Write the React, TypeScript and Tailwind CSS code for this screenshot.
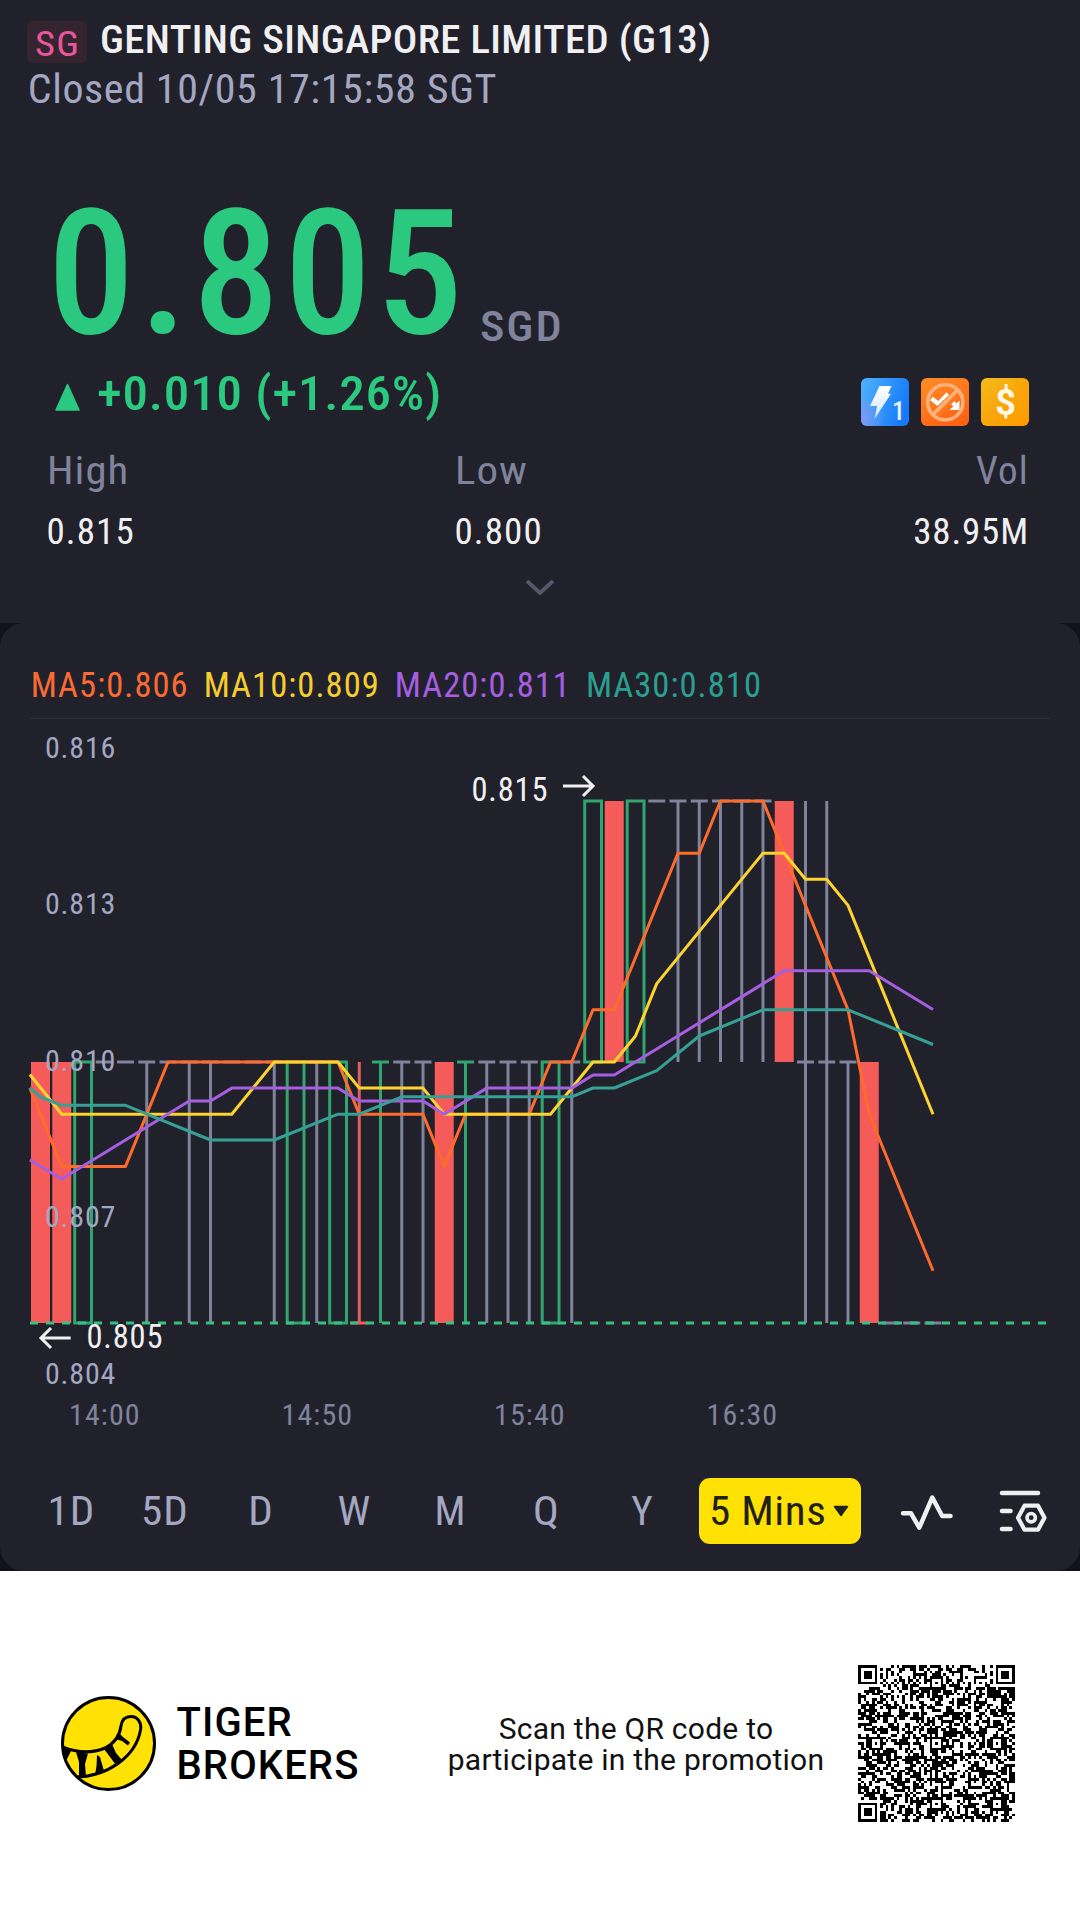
const GREEN = '#2ac97f'
const CANDLE_GREEN = '#30a56e'
const RED = '#f55b59'
const GRAY = '#7f839b'

type Kind = 'down' | 'up' | 'flat' | 'tee' | 'teeUp' | 'dip' | 'cross'
type Candle = { i: number; kind: Kind; price?: number }

// Every five-minute candle up to the close; price is the top of the body or the dash.
const candles: Candle[] = [
  { i: 0, kind: 'down' }, { i: 1, kind: 'down' }, { i: 2, kind: 'up' },
  { i: 3, kind: 'flat' }, { i: 4, kind: 'flat' }, { i: 5, kind: 'tee' }, { i: 6, kind: 'flat' },
  { i: 7, kind: 'tee' }, { i: 8, kind: 'tee' }, { i: 9, kind: 'flat' }, { i: 10, kind: 'flat' },
  { i: 11, kind: 'tee' }, { i: 12, kind: 'up' }, { i: 13, kind: 'tee' }, { i: 14, kind: 'up' },
  { i: 15, kind: 'dip' }, { i: 16, kind: 'teeUp' }, { i: 17, kind: 'tee' }, { i: 18, kind: 'tee' },
  { i: 19, kind: 'down' }, { i: 20, kind: 'teeUp' }, { i: 21, kind: 'tee' }, { i: 22, kind: 'tee' },
  { i: 23, kind: 'tee' }, { i: 24, kind: 'up' }, { i: 25, kind: 'tee' },
  { i: 26, kind: 'up', price: 815 }, { i: 27, kind: 'down', price: 815 }, { i: 28, kind: 'up', price: 815 },
  { i: 29, kind: 'flat', price: 815 }, { i: 30, kind: 'tee', price: 815 }, { i: 31, kind: 'tee', price: 815 },
  { i: 32, kind: 'tee', price: 815 }, { i: 33, kind: 'tee', price: 815 }, { i: 34, kind: 'tee', price: 815 },
  { i: 35, kind: 'down', price: 815 }, { i: 36, kind: 'cross' }, { i: 37, kind: 'cross' },
  { i: 38, kind: 'tee' }, { i: 39, kind: 'down' },
  { i: 40, kind: 'flat', price: 805 }, { i: 41, kind: 'flat', price: 805 }, { i: 42, kind: 'flat', price: 805 },
]

const cx = (i: number) => 40.5 + 21.25 * i
const cy = (p: number) => 1323 - (p - 805) * 52.2

function CandleShape({ i, kind, price = 810 }: Candle) {
  const x = cx(i)
  const top = cy(price)
  const h = 261
  const dash = (y: number, c: string) => <path d={`M${x - 8.5} ${y}h17`} stroke={c} strokeWidth={3} />
  const wick = (y1: number, y2: number, c: string) => <path d={`M${x} ${y1}V${y2}`} stroke={c} strokeWidth={3} />
  switch (kind) {
    case 'down':
      return <rect x={x - 9.5} y={top} width={19} height={h} fill={RED} />
    case 'up':
      return <rect x={x - 8.3} y={top} width={16.8} height={h} fill="none" stroke={CANDLE_GREEN} strokeWidth={3} />
    case 'flat':
      return dash(top, GRAY)
    case 'tee':
      return <>{dash(top, GRAY)}{wick(top, top + h, GRAY)}</>
    case 'teeUp':
      return <>{dash(top, CANDLE_GREEN)}{wick(top, top + h, CANDLE_GREEN)}</>
    case 'dip':
      return <>{dash(top + h, RED)}{wick(top, top + h, '#e0605f')}</>
    case 'cross':
      return <>{dash(top, GRAY)}{wick(top - h, top + h, GRAY)}</>
  }
}

type Pt = [number, number]
const averages: { color: string; pts: Pt[] }[] = [
  { color: '#ff6b2c', pts: [[-0.5, 1088], [0, 1114.2], [1, 1166.4], [4, 1166.4], [6, 1062], [14, 1062], [15, 1114.2], [18, 1114.2], [19, 1166.4], [20, 1114.2], [23, 1114.2], [24, 1062], [25, 1062], [26, 1009.8], [27, 1009.8], [30, 853.2], [31, 853.2], [32, 801], [34, 801], [38, 1009.8], [39, 1114.2], [42, 1270.8]] },
  { color: '#fdd32f', pts: [[-0.5, 1074.5], [1, 1114.2], [9, 1114.2], [11, 1062], [14, 1062], [15, 1088.1], [18, 1088.1], [19, 1114.2], [24, 1114.2], [26, 1062], [27, 1062], [28, 1036], [29, 983.6], [34, 853.2], [35, 853.2], [36, 879.3], [37, 879.3], [38, 905.4], [42, 1114.2]] },
  { color: '#a55ee0', pts: [[-0.5, 1160], [1, 1179], [7, 1101], [8, 1101], [9, 1088.1], [14, 1088.1], [15, 1101], [18, 1101], [19, 1114.2], [21, 1088.1], [25, 1088.1], [26, 1075], [27, 1075], [35, 970.7], [39, 970.7], [42, 1009.5]] },
  { color: '#35a093', pts: [[-0.5, 1088], [0, 1097], [1, 1105.3], [4, 1105.3], [8, 1140], [11, 1140], [14, 1114.2], [15, 1114.2], [17, 1096.8], [25, 1096.8], [26, 1088], [27, 1088], [29, 1070.7], [31, 1036], [34, 1009.8], [38, 1009.8], [42, 1044.5]] },
]

const levels: [string, number][] = [
  ['0.816', 757.7], ['0.813', 914.2], ['0.810', 1070.7], ['0.807', 1227.2], ['0.804', 1383.7],
]
const times: [string, number][] = [['14:00', 69], ['14:50', 281.5], ['15:40', 494], ['16:30', 706.5]]

function Chart() {
  return (
    <svg viewBox="0 719 1080 721" className="block h-[721px] w-[1080px]">
      {candles.map((c) => <CandleShape key={c.i} {...c} />)}
      <path d="M30 1323H1050" stroke="#34c181" strokeWidth={3} strokeDasharray="8 8" />
      {averages.map((a) => (
        <polyline key={a.color} points={a.pts.map(([i, y]) => `${cx(i)},${y}`).join(' ')} fill="none" stroke={a.color} strokeWidth={3} strokeLinejoin="round" />
      ))}
      <g className="fill-[#a3a7c2] text-[30px] tracking-[0.8px]">
        {levels.map(([t, y]) => <text key={t} x={45} y={y}>{t}</text>)}
      </g>
      <g className="fill-[#7f839b] text-[30px] tracking-[1.1px]">
        {times.map(([t, x]) => <text key={t} x={x} y={1424.5}>{t}</text>)}
      </g>
      <g className="fill-[#f0f0f2] text-[32.5px] tracking-[0.82px]">
        <text x={86.5} y={1347.8}>0.805</text>
        <text x={471.5} y={800.7}>0.815</text>
      </g>
      <g fill="none" stroke="#f0f0f2" strokeWidth={3}>
        <path d="M70.7 1338H41M51 1328L41 1338l10 10" />
        <path d="M563 786h30M583 776l10 10l-10 10" />
      </g>
    </svg>
  )
}

const N = 57
const centres = [6, 28, 50]

function isDark(r: number, c: number): boolean {
  for (const [fr, fc] of [[3, 3], [3, N - 4], [N - 4, 3]]) {
    const d = Math.max(Math.abs(r - fr), Math.abs(c - fc))
    if (d <= 4) return d !== 4 && d !== 2
  }
  for (const ar of centres) {
    for (const ac of centres) {
      if ((ar === 6 && ac !== 28) || (ac === 6 && ar !== 28)) continue
      const d = Math.max(Math.abs(r - ar), Math.abs(c - ac))
      if (d <= 2) return d !== 1
    }
  }
  if (r === 6 || c === 6) return (r + c) % 2 === 0
  let h = Math.imul(r * N + c + 11, 2654435761) >>> 0
  h ^= h >>> 15
  h = Math.imul(h, 2246822519) >>> 0
  h ^= h >>> 13
  return (h & 255) < 132
}

const qrPath = Array.from({ length: N * N }, (_, k) => [Math.floor(k / N), k % N])
  .filter(([r, c]) => isDark(r, c))
  .map(([r, c]) => `M${c} ${r}h1v1h-1z`)
  .join('')

function Logo() {
  return (
    <svg viewBox="0 0 95 95" className="h-[95px] w-[95px]">
      <defs>
        <clipPath id="face"><circle cx="47.5" cy="47.5" r="46.5" /></clipPath>
      </defs>
      <circle cx="47.5" cy="47.5" r="46" fill="#ffe103" />
      <g clipPath="url(#face)">
        <path d="M1 51C14 56 30 58 44 52C56 46 59 38 60 30C61 23 65 20.5 70 20.5C76 20.5 81 26 79.5 34C77 48 69 59 57 67.5C45 76 32 81 14 81" fill="none" stroke="#000" strokeWidth="3" />
        <path d="M1 50L10 55L5 65L0 64zM15 56L27 57.500L24 68L25 81L18 81.500L18 66zM36 59L39 61L43 75L34 79L35.500 70zM43 53L51 48L55 57L61 64L55 69L49 61zM54 43L59 38L62 41L69 46.500L67 49.500L61 45z" />
      </g>
      <circle cx="47.5" cy="47.5" r="46" fill="none" stroke="#000" strokeWidth="3" />
    </svg>
  )
}

function Badges() {
  return (
    <div className="flex gap-3">
      <svg viewBox="0 0 48 48" className="h-12 w-12">
        <defs>
          <linearGradient id="b1" x1="0" y1="0.2" x2="1" y2="0.5"><stop stopColor="#4db0fc" /><stop offset="1" stopColor="#1579fb" /></linearGradient>
          <radialGradient id="b1g" cx="0" cy="0.85" r="0.5"><stop stopColor="#8a97f2" stopOpacity="0.9" /><stop offset="1" stopColor="#8a97f2" stopOpacity="0" /></radialGradient>
          <linearGradient id="bolt" x1="0" y1="0" x2="0" y2="1"><stop stopColor="#fff" /><stop offset="1" stopColor="#cfe6ff" /></linearGradient>
        </defs>
        <rect width="48" height="48" rx="6" fill="url(#b1)" />
        <rect width="48" height="48" rx="6" fill="url(#b1g)" />
        <path d="M18.500 8H30.500L27 15.700H30L13.500 41L16 28H9z" fill="url(#bolt)" />
        <text x="31" y="42" className="fill-[#e6f2ff] text-[26px] font-medium">1</text>
      </svg>
      <svg viewBox="0 0 48 48" className="h-12 w-12">
        <defs>
          <linearGradient id="b2" x1="0.2" y1="0" x2="0.7" y2="1"><stop stopColor="#ff8a24" /><stop offset="1" stopColor="#ff6114" /></linearGradient>
        </defs>
        <rect width="48" height="48" rx="6" fill="url(#b2)" />
        <path d="M10.500 20.500L17.500 26L25.500 17.500L34 27" fill="none" stroke="#fff" strokeWidth="4.500" />
        <path d="M38.500 22.500V32H28.500z" fill="#fff" />
        <path d="M13 37L37.500 13.500" stroke="#ff7a1c" strokeWidth="8" />
        <circle cx="24.300" cy="24.300" r="17.600" fill="none" stroke="#ffb27c" strokeWidth="3.600" />
        <path d="M12 36.500L36.500 12" stroke="#ffb27c" strokeWidth="3.800" />
      </svg>
      <svg viewBox="0 0 48 48" className="h-12 w-12">
        <defs>
          <linearGradient id="b3" x1="0" y1="0" x2="1" y2="1"><stop stopColor="#f3bc1c" /><stop offset="0.500" stopColor="#f9a60a" /><stop offset="1" stopColor="#ff9a00" /></linearGradient>
        </defs>
        <rect width="48" height="48" rx="6" fill="url(#b3)" />
        <text x="24.500" y="37" textAnchor="middle" className="fill-[#fff8e6] text-[36px] font-bold font-stretch-normal">$</text>
      </svg>
    </div>
  )
}

export default function App() {
  return (
    <div className="h-[1916px] w-[1080px] overflow-hidden bg-white font-['Roboto',sans-serif] whitespace-nowrap font-stretch-condensed">
      <header className="h-[623px] bg-[#21212b] pt-[21px]">
        <div className="flex h-[42px] items-start pl-[27px]">
          <span className="flex h-[42px] w-[60px] rounded-[6px] bg-[#33242f] pl-[7.5px]">
            <span className="origin-left scale-x-110 text-[35px] leading-[47px] tracking-[1.2px] text-[#e8569c]">SG</span>
          </span>
          <h1 className="ml-[12.5px] origin-left scale-x-[1.06] text-[38.5px] leading-[37px] font-medium tracking-[0.33px] text-[#f0f0f2]">GENTING SINGAPORE LIMITED (G13)</h1>
        </div>
        <p className="mt-[7px] w-fit origin-left scale-x-105 pl-[26.4px] text-[40px] leading-[40px] tracking-[0.58px] text-[#a3a7c2]">Closed 10/05 17:15:58 SGT</p>
        <div className="mt-[98.5px] flex h-[130px] items-start pl-[47.5px]">
          <span className="text-[174px] leading-[130px] font-medium tracking-[4.77px] text-[#2ac97f]">0.805</span>
          <span className="mt-[97px] ml-[12.7px] origin-left scale-x-110 text-[42px] leading-[42px] font-medium tracking-[1.7px] text-[#7f839b]">SGD</span>
        </div>
        <div className="mt-[39.5px] flex h-12 items-start pr-[51px] pl-[55px]">
          <svg viewBox="0 0 25 28" className="mt-[4.7px] h-[28px] w-[25px]">
            <path d="M12.500 1.500L24 27H1z" fill={GREEN} stroke={GREEN} strokeWidth="1.500" strokeLinejoin="round" />
          </svg>
          <span className="ml-[16.5px] origin-left scale-x-[1.04] text-[49px] leading-[32px] font-medium tracking-[0.79px] text-[#2ac97f]">+0.010 (+1.26%)</span>
          <div className="ml-auto"><Badges /></div>
        </div>
        <dl className="mt-[25px] flex pr-[51px] pl-[46.5px] leading-[40px]">
          <div className="w-[408px]">
            <dt className="w-fit origin-left scale-x-110 text-[39px] tracking-[0.9px] text-[#7f839b]">High</dt>
            <dd className="mt-[20.500px] text-[37px] tracking-[1.1px] text-[#f0f0f2]">0.815</dd>
          </div>
          <div className="flex-1">
            <dt className="w-fit origin-left scale-x-110 text-[39px] tracking-[0.9px] text-[#7f839b]">Low</dt>
            <dd className="mt-[20.500px] text-[37px] tracking-[1.1px] text-[#f0f0f2]">0.800</dd>
          </div>
          <div className="text-right">
            <dt className="text-[39px] tracking-[1.2px] text-[#7f839b]">Vol</dt>
            <dd className="mt-[20.500px] text-[37px] tracking-[0.84px] text-[#f0f0f2]">38.95M</dd>
          </div>
        </dl>
        <svg viewBox="0 0 30 16" className="mx-auto mt-[27.5px] block h-[16px] w-[30px]">
          <path d="M2 2L15 14L28 2" fill="none" stroke="#55576a" strokeWidth="3.800" />
        </svg>
      </header>

      <div className="bg-[#11121b]">
        <section className="h-[948px] rounded-[24px] bg-[#21212b] pt-[44px]">
          <div className="flex gap-[15px] pl-[30.7px] text-[34.5px] leading-[36px] tracking-[1.05px]">
            <span className="text-[#f96b33]">MA5:0.806</span>
            <span className="text-[#f5cd2f]">MA10:0.809</span>
            <span className="text-[#a55ee0]">MA20:0.811</span>
            <span className="text-[#2b9f90]">MA30:0.810</span>
          </div>
          <div className="mx-[30px] mt-[15px] h-px bg-[#2e2f3c]" />
          <Chart />
          <nav className="mt-[38px] flex h-[66px] items-center pl-[24px] text-[41px] leading-[41px] text-[#a3a7c2]">
            <span className="w-[95px] scale-x-105 text-center tracking-[1px]">1D</span>
            <span className="w-[95px] scale-x-105 pr-[3px] text-center tracking-[1px]">5D</span>
            <span className="w-[95px] scale-x-105 pr-[2px] text-center">D</span>
            <span className="w-[95px] scale-x-105 pr-[5px] text-center">W</span>
            <span className="w-[95px] pr-[3px] text-center">M</span>
            <span className="w-[95px] scale-x-105 pr-[1px] text-center">Q</span>
            <span className="w-[95px] pl-[1px] text-center">Y</span>
            <button className="ml-[10px] flex h-[66px] w-[162px] items-center rounded-[11px] bg-[#ffe103] pl-[9.5px] text-[#21211a]">
              <span className="origin-left scale-x-105 tracking-[0.54px]">5 Mins</span>
              <svg viewBox="0 0 16 12" className="ml-[12.5px] h-[12px] w-[16px]">
                <path d="M1.500 1.500H14.500L8 10.500z" fill="#21211a" stroke="#21211a" strokeWidth="1.500" strokeLinejoin="round" />
              </svg>
            </button>
            <svg viewBox="899 1490 56 42" className="ml-[38px] h-[42px] w-[56px]" fill="none" stroke="#f0f0f2" strokeWidth="4.500" strokeLinecap="round" strokeLinejoin="round">
              <path d="M903 1513.300H911L919.300 1527.700L932.300 1497.500L942.200 1516H950.500" />
            </svg>
            <svg viewBox="998 1489 50 46" className="ml-[43px] h-[46px] w-[50px]" fill="none" stroke="#f0f0f2" strokeWidth="4.500" strokeLinecap="round" strokeLinejoin="round">
              <path d="M1002 1494H1038M1002 1512H1010.500M1002 1530H1010.500" />
              <path d="M1024.500 1506.700H1038L1044.500 1518.700L1038 1530.700H1024.500L1018 1518.700z" strokeWidth="4.200" />
              <circle cx="1031.200" cy="1518.700" r="4.200" strokeWidth="3.600" />
            </svg>
          </nav>
        </section>
      </div>

      <footer className="mt-[94px] flex h-[157px] items-center pl-[60.5px]">
        <Logo />
        <div className="ml-[21px] w-[200px] pt-px text-[40px] leading-[43.3px] font-medium tracking-[1.1px] text-black font-stretch-normal">
          <div>TIGER</div>
          <div>BROKERS</div>
        </div>
        <div className="ml-[59px] w-[401px] text-center text-[30px] leading-[31px] tracking-[0.25px] text-[#111] font-stretch-normal">
          <div>Scan the QR code to</div>
          <div>participate in the promotion</div>
        </div>
        <svg viewBox="0 0 57 57" className="ml-[21px] h-[157px] w-[157px]" shapeRendering="crispEdges">
          <path d={qrPath} />
        </svg>
      </footer>
    </div>
  )
}
